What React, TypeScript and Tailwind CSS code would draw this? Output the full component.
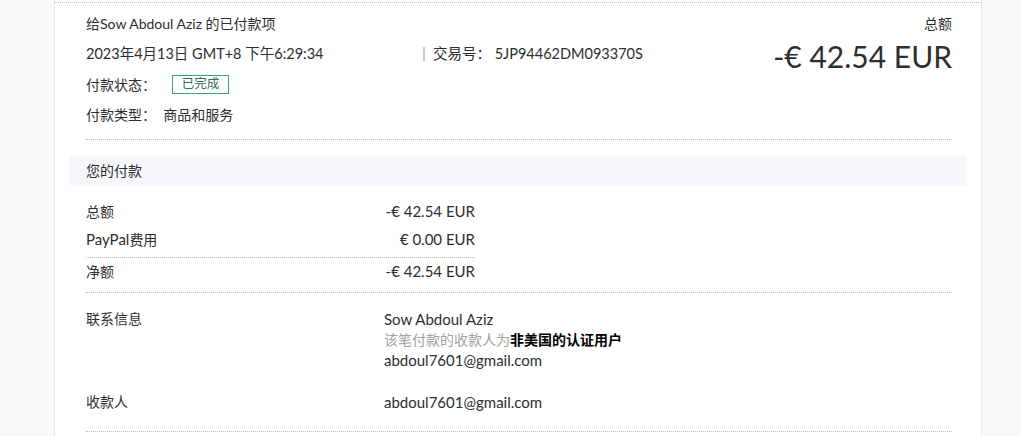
const font = { fontFamily: '"Lato", "Noto Sans CJK SC", sans-serif' }

function DottedLine({ className = "" }: { className?: string }) {
  return <div className={`border-t border-dotted border-[#b9b9b9] ${className}`} />
}

export default function App() {
  return (
    <div style={font} className="flex h-[436px] w-[1021px] overflow-hidden bg-[#fafafa] text-[14px] text-[#2c2e2f]">
      <div className="w-[54px] shrink-0" />
      <div className="w-[928px] shrink-0 border-x border-[#e6e6e6] bg-white">
        <DottedLine className="mt-[2px]" />

        {/* header */}
        <div className="pl-[31px] pr-[29px] pt-[6px]">
          <div className="flex justify-between">
            <div>
              <div className="leading-[30px]">给Sow Abdoul Aziz 的已付款项</div>
              <div className="flex items-center text-[14.5px] leading-[30px]">
                <span className="w-[337px]">2023年4月13日 GMT+8 下午6:29:34</span>
                <span className="mr-[8px] h-[14px] w-[2px] bg-[#c8c8c8]" />
                <span>交易号：&nbsp;5JP94462DM093370S</span>
              </div>
              <div className="flex h-[31px] items-center">
                <span className="w-[86px]">付款状态：</span>
                <span className="flex h-[19px] w-[57px] items-center justify-center border border-[#3a9f82] text-[12.5px] text-[#2b6d52]">
                  已完成
                </span>
              </div>
              <div className="leading-[30px]">付款类型：&nbsp;&nbsp;商品和服务</div>
            </div>
            <div className="text-right">
              <div className="leading-[30px]">总额</div>
              <div className="text-[30px] leading-[34px]">-€ 42.54 EUR</div>
            </div>
          </div>
          <DottedLine className="mt-[9px]" />
        </div>

        {/* your payment */}
        <div className="mx-[15px] mt-[16px] flex h-[29px] items-center bg-[#f5f7fa] pl-[16px] shadow-[0_0_2px_rgba(0,0,0,0.06)]">
          您的付款
        </div>

        <div className="pl-[31px] pr-[29px]">
          <div className="w-[389px] text-[15px]">
            <div className="mt-[12px] flex h-[28px] items-center justify-between">
              <span className="text-[14px]">总额</span>
              <span>-€ 42.54 EUR</span>
            </div>
            <div className="flex h-[28px] items-center justify-between">
              <span>
                PayPal<span className="text-[14px]">费用</span>
              </span>
              <span>€ 0.00 EUR</span>
            </div>
            <DottedLine className="mt-[4px]" />
            <div className="flex h-[27px] items-center justify-between">
              <span className="text-[14px]">净额</span>
              <span>-€ 42.54 EUR</span>
            </div>
          </div>
          <DottedLine className="mt-[7px]" />

          <div className="flex pt-[16px] leading-[20.5px]">
            <div className="w-[298px]">联系信息</div>
            <div>
              <div className="text-[15px]">Sow Abdoul Aziz</div>
              <div>
                <span className="text-[#a0a0a0]">该笔付款的收款人为</span>
                <span className="font-bold text-black">非美国的认证用户</span>
              </div>
              <div className="text-[15px]">abdoul7601@gmail.com</div>
            </div>
          </div>
          <div className="flex pt-[21px] leading-[20.5px]">
            <div className="w-[298px]">收款人</div>
            <div className="text-[15px]">abdoul7601@gmail.com</div>
          </div>
          <DottedLine className="mt-[19px]" />
        </div>
      </div>
      <div className="flex-1 bg-[#f8f8f8]" />
    </div>
  )
}
